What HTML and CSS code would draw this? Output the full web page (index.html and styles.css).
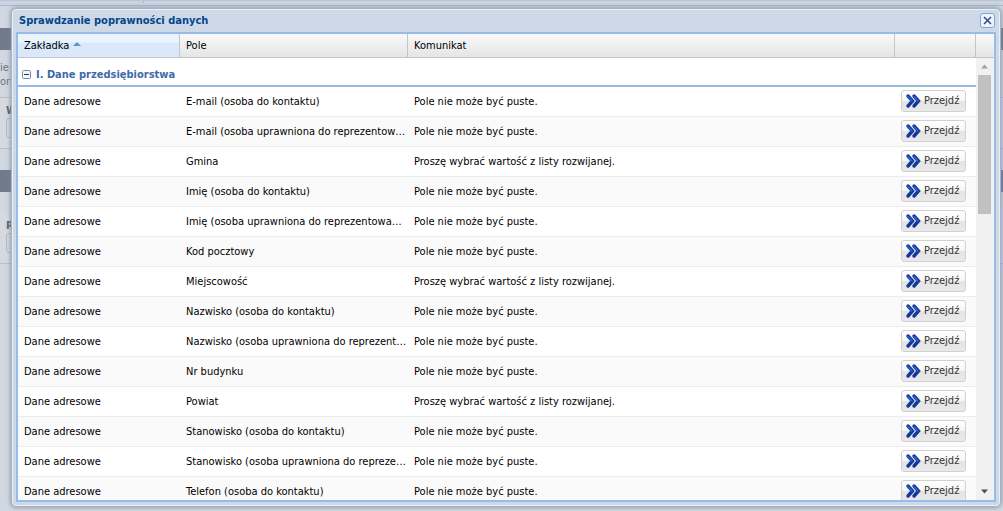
FILE: index.html
```
<!DOCTYPE html>
<html lang="pl">
<head>
<meta charset="utf-8">
<meta name="viewport" content="width=device-width, initial-scale=1">
<title>Sprawdzanie poprawności danych</title>
<link rel="stylesheet" href="styles.css">
</head>
<body>
<svg class="defs" aria-hidden="true">
  <symbol id="go" viewBox="0 0 16 16">
    <path d="M3 3l4.500 5L3 13M9 3l4.500 5L9 13" fill="none" stroke="#12379c" stroke-width="3.400" stroke-linecap="round"/>
    <path d="M3 3.500l4 4.500M9 3.500l4 4.500" fill="none" stroke="#2f68d8" stroke-width="1.200" stroke-linecap="round"/>
  </symbol>
</svg>

<div class="backdrop" aria-hidden="true">
  <div class="tabs"><span></span></div>
  <div class="bar"></div>
  <div class="intro"><span>ie<br>orm</span></div>
  <div class="field"><b>W</b><i></i></div>
  <div class="space"></div>
  <div class="bar"></div>
  <div class="space"></div>
  <div class="field"><b>R</b><i></i></div>
</div>

<section class="window" role="dialog" aria-labelledby="title">
  <header class="titlebar">
    <h1 id="title">Sprawdzanie poprawności danych</h1>
    <button class="close" type="button" aria-label="Zamknij">
      <svg viewBox="0 0 13 13"><path d="M3 3l7 7M10 3l-7 7" stroke="#2b4a86" stroke-width="1.500"/></svg>
    </button>
  </header>
  <div class="panel">
    <table class="grid head">
      <colgroup><col class="c-tab"><col class="c-field"><col><col class="c-go"><col class="c-bar"></colgroup>
      <thead><tr>
        <th class="sorted" aria-sort="ascending">Zakładka <svg viewBox="0 0 8 5"><path d="M4 0l4 4H0z" fill="#6b8fc0"/></svg></th>
        <th>Pole</th><th>Komunikat</th><th></th><th></th>
      </tr></thead>
    </table>
    <div class="view">
      <div class="rows">
        <h2 class="group"><svg viewBox="0 0 9 9"><rect x=".5" y=".5" width="8" height="8" rx="1" fill="#f4f7fb" stroke="#7288a8"/><path d="M2 4.500h5" stroke="#234"/></svg>I. Dane przedsiębiorstwa</h2>
        <table class="grid body">
          <colgroup><col class="c-tab"><col class="c-field"><col><col class="c-go"></colgroup>
          <tbody>
            <tr><td>Dane adresowe</td><td>E-mail (osoba do kontaktu)</td><td>Pole nie może być puste.</td><td><button class="go" type="button"><svg><use href="#go"/></svg>Przejdź</button></td></tr>
            <tr><td>Dane adresowe</td><td>E-mail (osoba uprawniona do reprezentow…</td><td>Pole nie może być puste.</td><td><button class="go" type="button"><svg><use href="#go"/></svg>Przejdź</button></td></tr>
            <tr><td>Dane adresowe</td><td>Gmina</td><td>Proszę wybrać wartość z listy rozwijanej.</td><td><button class="go" type="button"><svg><use href="#go"/></svg>Przejdź</button></td></tr>
            <tr><td>Dane adresowe</td><td>Imię (osoba do kontaktu)</td><td>Pole nie może być puste.</td><td><button class="go" type="button"><svg><use href="#go"/></svg>Przejdź</button></td></tr>
            <tr><td>Dane adresowe</td><td>Imię (osoba uprawniona do reprezentowa…</td><td>Pole nie może być puste.</td><td><button class="go" type="button"><svg><use href="#go"/></svg>Przejdź</button></td></tr>
            <tr><td>Dane adresowe</td><td>Kod pocztowy</td><td>Pole nie może być puste.</td><td><button class="go" type="button"><svg><use href="#go"/></svg>Przejdź</button></td></tr>
            <tr><td>Dane adresowe</td><td>Miejscowość</td><td>Proszę wybrać wartość z listy rozwijanej.</td><td><button class="go" type="button"><svg><use href="#go"/></svg>Przejdź</button></td></tr>
            <tr><td>Dane adresowe</td><td>Nazwisko (osoba do kontaktu)</td><td>Pole nie może być puste.</td><td><button class="go" type="button"><svg><use href="#go"/></svg>Przejdź</button></td></tr>
            <tr><td>Dane adresowe</td><td>Nazwisko (osoba uprawniona do reprezent…</td><td>Pole nie może być puste.</td><td><button class="go" type="button"><svg><use href="#go"/></svg>Przejdź</button></td></tr>
            <tr><td>Dane adresowe</td><td>Nr budynku</td><td>Pole nie może być puste.</td><td><button class="go" type="button"><svg><use href="#go"/></svg>Przejdź</button></td></tr>
            <tr><td>Dane adresowe</td><td>Powiat</td><td>Proszę wybrać wartość z listy rozwijanej.</td><td><button class="go" type="button"><svg><use href="#go"/></svg>Przejdź</button></td></tr>
            <tr><td>Dane adresowe</td><td>Stanowisko (osoba do kontaktu)</td><td>Pole nie może być puste.</td><td><button class="go" type="button"><svg><use href="#go"/></svg>Przejdź</button></td></tr>
            <tr><td>Dane adresowe</td><td>Stanowisko (osoba uprawniona do repreze…</td><td>Pole nie może być puste.</td><td><button class="go" type="button"><svg><use href="#go"/></svg>Przejdź</button></td></tr>
            <tr><td>Dane adresowe</td><td>Telefon (osoba do kontaktu)</td><td>Pole nie może być puste.</td><td><button class="go" type="button"><svg><use href="#go"/></svg>Przejdź</button></td></tr>
          </tbody>
        </table>
      </div>
      <div class="scrollbar" aria-hidden="true">
        <svg viewBox="0 0 17 17"><path d="M8.500 6.500l3.500 4H5z" fill="#a3a3a3"/></svg>
        <div class="track"><div class="thumb"></div></div>
        <svg viewBox="0 0 17 17"><path d="M8.500 10.500l3.500-4H5z" fill="#505050"/></svg>
      </div>
    </div>
  </div>
</section>
</body>
</html>
```
FILE: styles.css
```
* { box-sizing: border-box; }

body {
  margin: 0;
  height: 100vh;
  overflow: hidden;
  background: #d2d8e1;
  color: #000;
  font: 11px/14px "DejaVu Sans Condensed", "DejaVu Sans", sans-serif;
}

.defs { display: none; }

/* Form page dimmed behind the dialog */
.tabs {
  height: 6px;
  margin-bottom: 22px;
  border-top: 1px solid #b9c5d6;
  border-bottom: 1px solid #a9b9ce;
  background: #cbd5e2;
}
.tabs span {
  display: block;
  width: 144px;
  height: 2px;
  border-right: 1px solid #a9b9ce;
}
.bar { height: 22px; background: #6f7a8b; }
.intro {
  height: 48px;
  padding-top: 11px;
  border-bottom: 1px solid #b9c0cb;
  color: #6d737c;
}
.field {
  height: 51px;
  padding: 6px 0 0 6px;
  border-bottom: 1px solid #b9c0cb;
  background: #d6dae0;
  color: #5d6268;
}
.field b { display: block; }
.field i {
  display: block;
  width: 120px;
  height: 20px;
  border: 1px solid #b4bac3;
  border-radius: 3px;
}
.space { height: 21px; }

.window {
  position: absolute;
  inset: 8px 2px 4px 11px;
  display: flex;
  flex-direction: column;
  padding: 0 4px 4px;
  border: 1px solid #a5b3c7;
  border-radius: 5px;
  background: #ced9e7;
  box-shadow: inset 0 0 0 1px #e9f0f8, 0 0 5px #7c8796;
}
.titlebar {
  display: flex;
  align-items: center;
  justify-content: space-between;
  height: 23px;
  flex: none;
  padding: 0 1px 0 3px;
}
.titlebar h1 {
  margin: 0;
  color: #04468c;
  font-size: 11px;
  line-height: 14px;
}
.close {
  width: 15px;
  height: 15px;
  padding: 0;
  border: 1px solid #7ea5d8;
  border-radius: 3px;
  background: #edf4fd;
}
.close svg { display: block; width: 13px; height: 13px; }

.panel {
  flex: 1;
  min-height: 0;
  display: flex;
  flex-direction: column;
  border: 2px solid #99bbe8;
  background: #fff;
}
.grid { width: 100%; border-collapse: separate; border-spacing: 0; table-layout: fixed; }
.c-tab { width: 162px; }
.c-field { width: 228px; }
.c-go { width: 81px; }
.c-bar { width: 18px; }

.head { flex: none; }
.head th {
  height: 24px;
  padding: 1px 6px 0;
  border-right: 1px solid #c5c5c5;
  border-bottom: 1px solid #c5c5c5;
  background: linear-gradient(#f9f9f9, #e4e5e7);
  font-weight: normal;
  text-align: left;
}
.head th:last-child { border-right: 0; }
.head .sorted { background: linear-gradient(#ebf3fd 35%, #d9e8fb 40%); }
.sorted svg { width: 8px; height: 5px; margin-left: 1px; vertical-align: 2px; }

.view { flex: 1; min-height: 0; display: flex; overflow: hidden; }
.rows { flex: 1; min-width: 0; overflow: hidden; }
.group {
  display: flex;
  align-items: center;
  gap: 5px;
  height: 29px;
  margin: 0;
  padding: 6px 4px 0;
  border-bottom: 2px solid #9db9da;
  color: #3e6aaa;
  font-size: 11px;
  line-height: 14px;
}
.group svg { width: 9px; height: 9px; }

.body td {
  height: 30px;
  padding: 0 6px;
  border-bottom: 1px solid #ededed;
  white-space: nowrap;
}
.body td:nth-child(2) { padding-right: 0; }
.body td:last-child { padding-bottom: 1px; }
.body tr:nth-child(even) td { background: #fafafa; }
.go {
  display: flex;
  align-items: center;
  gap: 3px;
  width: 65px;
  height: 22px;
  padding: 0 3px;
  border: 1px solid #d1d1d1;
  border-radius: 3px;
  background: linear-gradient(#fff, #f6f6f6 48%, #e4e4e4 52%, #e9e9e9);
  color: #333;
  font: inherit;
}
.go svg { width: 16px; height: 16px; flex: none; }

.scrollbar {
  display: flex;
  flex-direction: column;
  width: 18px;
  padding-right: 1px;
  flex: none;
  background: #f1f1f1;
}
.scrollbar svg { width: 17px; height: 17px; flex: none; }
.track { flex: 1; padding: 0 2px; }
.thumb { height: 34%; background: #c1c1c1; }
```
